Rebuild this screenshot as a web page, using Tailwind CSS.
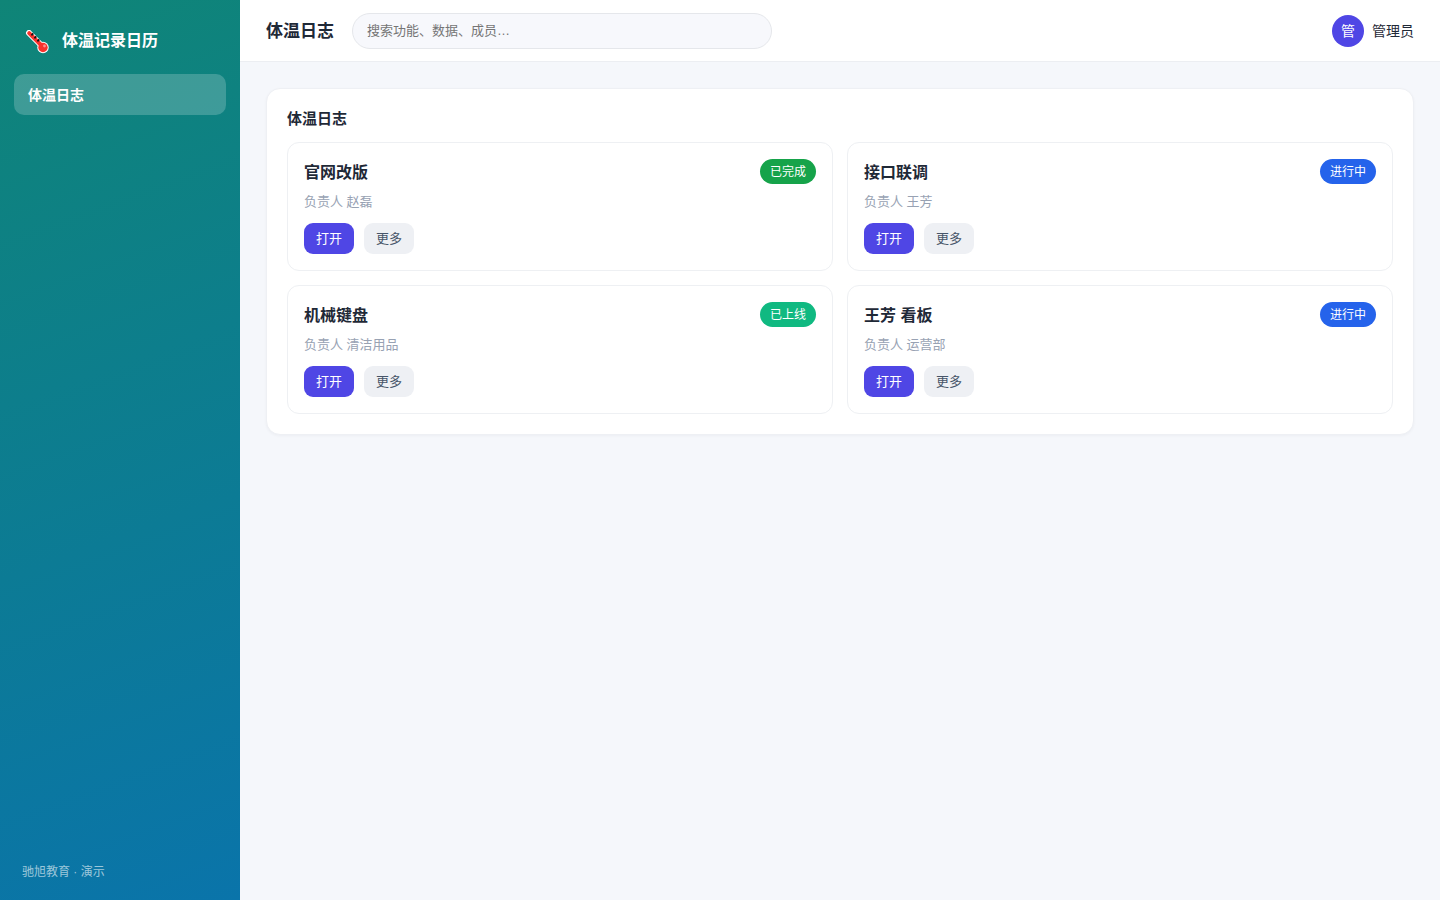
<!DOCTYPE html>
<html lang="zh-CN">

<head>
    <meta charset="UTF-8">
    <meta name="viewport" content="width=device-width, initial-scale=1.0">
    <title>体温记录日历</title>
    <script src="https://cdn.jsdelivr.net/npm/@tailwindcss/browser@4"></script>
</head>

<body class="flex min-h-screen bg-[#f5f7fb] text-sm text-[#1f2937] font-['Liberation_Sans','Noto_Sans_CJK_SC',sans-serif]">
    <!-- Sidebar -->
    <aside class="flex w-60 shrink-0 flex-col bg-[linear-gradient(160deg,#0f8577,#0a74aa)] px-3.5 py-5 text-white">
        <div class="flex h-[42px] items-center gap-2.5 px-2">
            <span class="flex w-[30px] justify-center pt-0.5">
                <svg class="h-6 w-6" viewBox="0 0 24 24" fill="none" aria-hidden="true">
                    <path d="M4 3 15 14" stroke="#fff" stroke-width="6" stroke-linecap="round" />
                    <circle cx="18" cy="17.5" r="5.7" fill="#fff" />
                    <path d="M4.2 3.2 16 15" stroke="#f9322c" stroke-width="4" stroke-linecap="round" />
                    <circle cx="18" cy="17.5" r="4.7" fill="#f9322c" />
                    <path d="M6.4 5.4 8.3 3.4M9.4 8.4l1.9-2M12.4 11.4l1.9-2" stroke="#111" stroke-width="1.7" />
                    <circle cx="19.5" cy="16" r="1.4" fill="#ff8f8b" />
                </svg>
            </span>
            <span class="text-base font-bold">体温记录日历</span>
        </div>
        <nav class="mt-3">
            <a href="#" class="block rounded-[10px] bg-white/20 px-3.5 pt-[11px] pb-[9px] leading-[21px] font-bold">体温日志</a>
        </nav>
        <div class="mt-auto px-2 text-xs text-white/60">驰旭教育 · 演示</div>
    </aside>

    <div class="min-w-0 flex-1">
        <!-- Top bar -->
        <header class="flex h-[62px] items-center border-b border-[#eceef2] bg-white px-[26px]">
            <h1 class="pt-1 text-[17px] font-bold">体温日志</h1>
            <input type="search" aria-label="搜索" placeholder="搜索功能、数据、成员…"
                class="ml-[18px] h-9 w-[420px] rounded-full border border-gray-200 bg-[#f7f8fc] px-3.5 text-[13px] placeholder:text-[#757575]">
            <div class="ml-auto flex items-center gap-2">
                <span class="flex h-8 w-8 items-center justify-center rounded-full bg-[#4f46e5] text-white">管</span>
                <span>管理员</span>
            </div>
        </header>

        <main class="p-[26px]">
            <section class="rounded-[14px] border border-[#eef0f4] bg-white p-5 shadow-[0_1px_3px_rgba(16,24,40,0.04)]">
                <h2 class="mb-3.5 text-[15px] leading-[19px] font-bold">体温日志</h2>
                <div class="grid grid-cols-2 gap-3.5">
                    <article class="rounded-xl border border-[#eef0f3] p-4">
                        <div class="flex items-center justify-between">
                            <h3 class="text-base leading-[23px] pt-0.5 font-bold">官网改版</h3>
                            <span class="rounded-full bg-[#16a34a] px-2.5 pt-[5px] pb-[3px] text-xs leading-[17px] text-white">已完成</span>
                        </div>
                        <p class="mt-[9px] text-[13px] leading-[17px] text-[#98a2b3]">负责人 赵磊</p>
                        <div class="mt-[13px] flex gap-2.5 text-[13px] leading-[17px]">
                            <button class="rounded-[9px] bg-[#4f46e5] px-3 py-[7px] text-white">打开</button>
                            <button class="rounded-[9px] bg-[#eef0f4] px-3 py-[7px] text-[#475569]">更多</button>
                        </div>
                    </article>
                    <article class="rounded-xl border border-[#eef0f3] p-4">
                        <div class="flex items-center justify-between">
                            <h3 class="text-base leading-[23px] pt-0.5 font-bold">接口联调</h3>
                            <span class="rounded-full bg-[#2563eb] px-2.5 pt-[5px] pb-[3px] text-xs leading-[17px] text-white">进行中</span>
                        </div>
                        <p class="mt-[9px] text-[13px] leading-[17px] text-[#98a2b3]">负责人 王芳</p>
                        <div class="mt-[13px] flex gap-2.5 text-[13px] leading-[17px]">
                            <button class="rounded-[9px] bg-[#4f46e5] px-3 py-[7px] text-white">打开</button>
                            <button class="rounded-[9px] bg-[#eef0f4] px-3 py-[7px] text-[#475569]">更多</button>
                        </div>
                    </article>
                    <article class="rounded-xl border border-[#eef0f3] p-4">
                        <div class="flex items-center justify-between">
                            <h3 class="text-base leading-[23px] pt-0.5 font-bold">机械键盘</h3>
                            <span class="rounded-full bg-[#10b981] px-2.5 pt-[5px] pb-[3px] text-xs leading-[17px] text-white">已上线</span>
                        </div>
                        <p class="mt-[9px] text-[13px] leading-[17px] text-[#98a2b3]">负责人 清洁用品</p>
                        <div class="mt-[13px] flex gap-2.5 text-[13px] leading-[17px]">
                            <button class="rounded-[9px] bg-[#4f46e5] px-3 py-[7px] text-white">打开</button>
                            <button class="rounded-[9px] bg-[#eef0f4] px-3 py-[7px] text-[#475569]">更多</button>
                        </div>
                    </article>
                    <article class="rounded-xl border border-[#eef0f3] p-4">
                        <div class="flex items-center justify-between">
                            <h3 class="text-base leading-[23px] pt-0.5 font-bold">王芳 看板</h3>
                            <span class="rounded-full bg-[#2563eb] px-2.5 pt-[5px] pb-[3px] text-xs leading-[17px] text-white">进行中</span>
                        </div>
                        <p class="mt-[9px] text-[13px] leading-[17px] text-[#98a2b3]">负责人 运营部</p>
                        <div class="mt-[13px] flex gap-2.5 text-[13px] leading-[17px]">
                            <button class="rounded-[9px] bg-[#4f46e5] px-3 py-[7px] text-white">打开</button>
                            <button class="rounded-[9px] bg-[#eef0f4] px-3 py-[7px] text-[#475569]">更多</button>
                        </div>
                    </article>
                </div>
            </section>
        </main>
    </div>
</body>

</html>
